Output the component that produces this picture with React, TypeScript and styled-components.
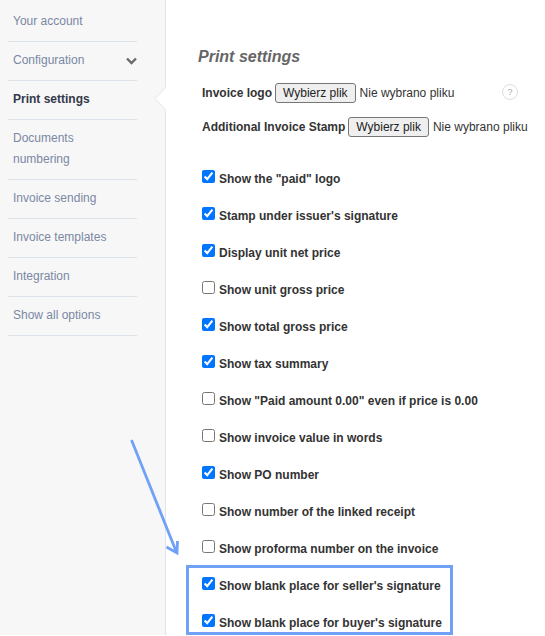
import styled, { createGlobalStyle } from 'styled-components';

const GlobalStyle = createGlobalStyle`
  html, body {
    margin: 0;
    padding: 0;
    background: #fff;
    font-family: 'Liberation Sans', Arial, sans-serif;
  }
`;

const Page = styled('div')`
  position: relative;
  display: flex;
  width: 545px;
  height: 636px;
  overflow: hidden;
`;

const Sidebar = styled('nav')`
  flex: 0 0 166px;
  height: 635px;
  box-sizing: border-box;
  background: #f7f7f7;
  border-right: 1px solid #dfe6ee;
  padding: 3px 28px 0 8px;
`;

const MenuItem = styled('div')<{ $active?: boolean }>`
  position: relative;
  display: flex;
  align-items: center;
  justify-content: space-between;
  padding: 8px 0 9px 5px;
  border-bottom: 1px solid #dde3ea;
  font-size: 12px;
  line-height: 21px;
  color: ${(p) => (p.$active ? '#33394a' : '#7a88a4')};
  font-weight: ${(p) => (p.$active ? 700 : 400)};
`;

const MenuLabel = styled('span')`
  max-width: 105px;
`;

const ActiveNotch = styled('svg')`
  position: absolute;
  left: 146px;
  top: 6px;
  width: 12px;
  height: 24px;
`;

const Main = styled('main')`
  flex: 1;
  padding: 48px 0 0 32px;
`;

const Title = styled('h2')`
  margin: 0 0 17px;
  font-size: 16px;
  line-height: 18px;
  font-style: italic;
  font-weight: 700;
  color: #666;
`;

const UploadRow = styled('div')`
  position: relative;
  display: flex;
  align-items: center;
  height: 20px;
  margin: 0 0 14px 4px;
  font-size: 12px;
  color: #333;
  white-space: nowrap;
`;

const UploadLabel = styled('span')`
  font-weight: 700;
  margin-right: 3px;
`;

const FileButton = styled('button')`
  height: 20px;
  padding: 0 7px;
  margin-right: 4px;
  font: 12px 'Liberation Sans', Arial, sans-serif;
  color: #222;
  background: #efefef;
  border: 1px solid #767676;
  border-radius: 3px;
`;

const HelpIcon = styled('span')`
  position: absolute;
  left: 300px;
  top: 1px;
  box-sizing: border-box;
  width: 16px;
  height: 16px;
  display: flex;
  align-items: center;
  justify-content: center;
  border: 1px solid #dedede;
  border-radius: 50%;
  font-size: 9px;
  color: #aaa;
`;

const Options = styled('div')`
  margin: 23px 0 0 4px;
`;

const OptionRow = styled('label')`
  display: flex;
  align-items: center;
  height: 37px;
  font-size: 12px;
  font-weight: 700;
  color: #333;
  white-space: nowrap;

  input {
    width: 13px;
    height: 13px;
    margin: 0 4px 5px 0;
  }
`;

const Highlight = styled('div')`
  position: absolute;
  left: 186px;
  top: 565px;
  box-sizing: border-box;
  width: 267px;
  height: 70px;
  border: 3px solid #6fa1f7;
  pointer-events: none;
`;

const ArrowMark = styled('svg')`
  position: absolute;
  left: 125px;
  top: 435px;
  width: 60px;
  height: 125px;
`;

const menu = [
  'Your account',
  'Configuration',
  'Print settings',
  'Documents numbering',
  'Invoice sending',
  'Invoice templates',
  'Integration',
  'Show all options',
];

const options: [string, boolean][] = [
  ['Show the "paid" logo', true],
  ["Stamp under issuer's signature", true],
  ['Display unit net price', true],
  ['Show unit gross price', false],
  ['Show total gross price', true],
  ['Show tax summary', true],
  ['Show "Paid amount 0.00" even if price is 0.00', false],
  ['Show invoice value in words', false],
  ['Show PO number', true],
  ['Show number of the linked receipt', false],
  ['Show proforma number on the invoice', false],
  ["Show blank place for seller's signature", true],
  ["Show blank place for buyer's signature", true],
];

const App = () => {
  return (
    <Page>
      <GlobalStyle />
      <Sidebar>
        {menu.map((item) => (
          <MenuItem key={item} $active={item === 'Print settings'}>
            <MenuLabel>{item}</MenuLabel>
            {item === 'Configuration' && (
              <svg width="11" height="8" viewBox="0 0 11 8">
                <path d="M1 1.5l4.5 4.5 4.5-4.5" fill="none" stroke="#6b6b6b" strokeWidth="2.4" />
              </svg>
            )}
            {item === 'Print settings' && (
              <ActiveNotch viewBox="0 0 12 24">
                <path d="M12 0L0.5 11.5 12 23z" fill="#fff" />
                <path d="M11.5 0.5L1 11.5 11.5 22.5" fill="none" stroke="#dfe6ee" />
              </ActiveNotch>
            )}
          </MenuItem>
        ))}
      </Sidebar>
      <Main>
        <Title>Print settings</Title>
        <UploadRow>
          <UploadLabel>Invoice logo</UploadLabel>
          <FileButton>Wybierz plik</FileButton>
          <span>Nie wybrano pliku</span>
          <HelpIcon>?</HelpIcon>
        </UploadRow>
        <UploadRow>
          <UploadLabel>Additional Invoice Stamp</UploadLabel>
          <FileButton>Wybierz plik</FileButton>
          <span>Nie wybrano pliku</span>
        </UploadRow>
        <Options>
          {options.map(([text, checked]) => (
            <OptionRow key={text}>
              <input type="checkbox" defaultChecked={checked} />
              {text}
            </OptionRow>
          ))}
        </Options>
      </Main>
      <ArrowMark viewBox="0 0 60 125">
        <path d="M6.5 5L51 116" fill="none" stroke="#6fa1f7" strokeWidth="2.8" />
        <path d="M41.5 112L52 118L52.5 106" fill="none" stroke="#6fa1f7" strokeWidth="2.8" />
      </ArrowMark>
      <Highlight />
    </Page>
  );
};

export default App;
